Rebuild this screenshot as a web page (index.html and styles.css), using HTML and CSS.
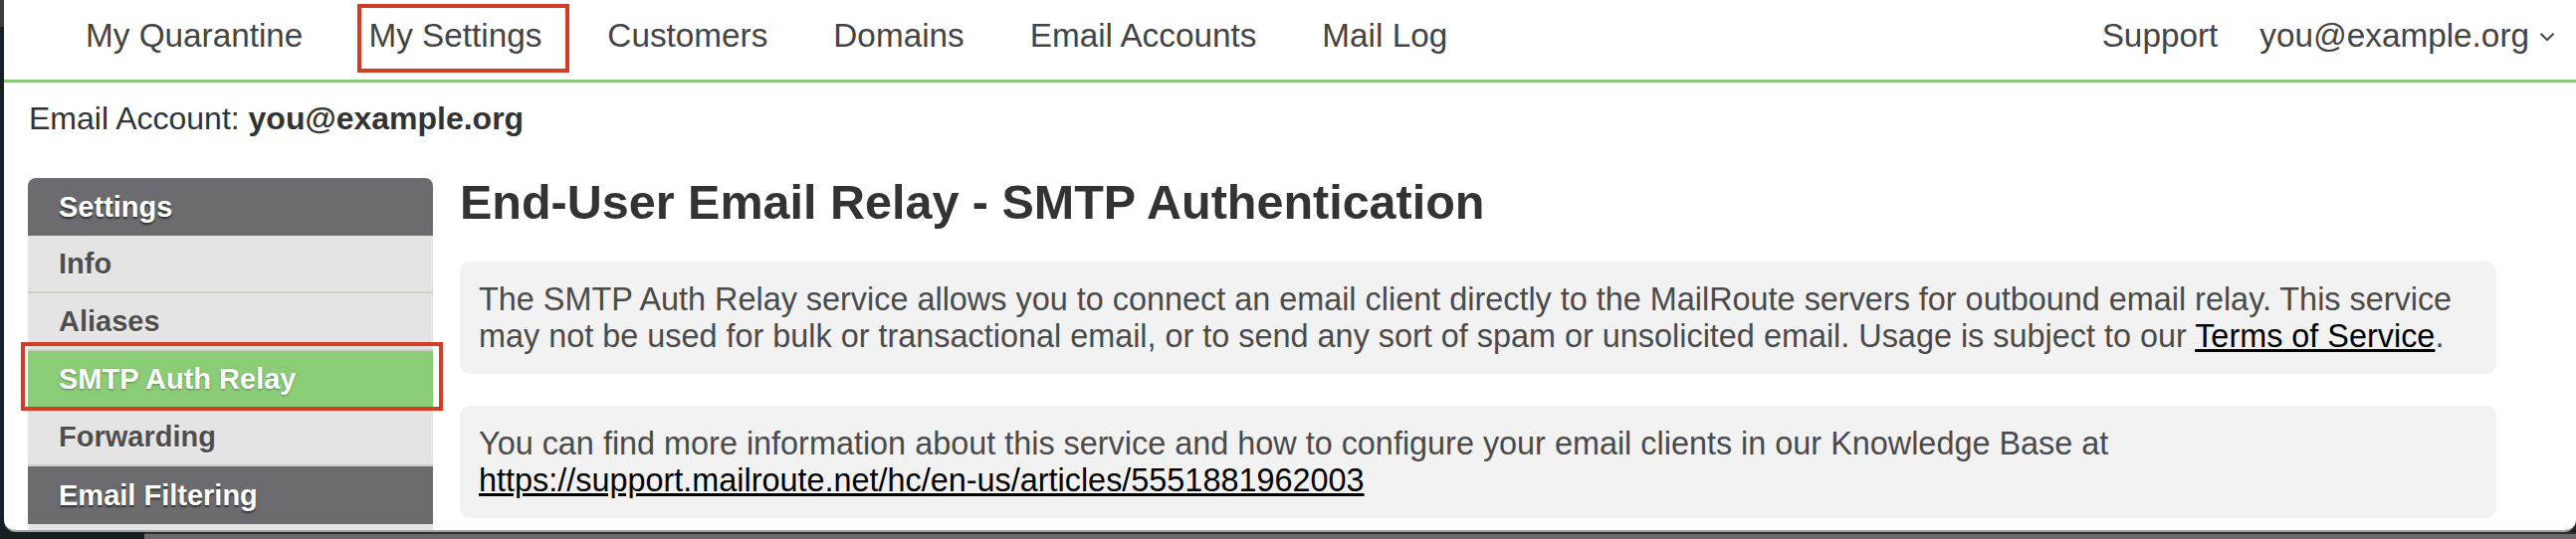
FILE: index.html
```html
<!DOCTYPE html>
<html lang="en">
<head>
<meta charset="utf-8">
<title>End-User Email Relay - SMTP Authentication</title>
<link rel="stylesheet" href="styles.css">
</head>
<body>
<div class="window">
  <header class="topnav">
    <ul class="nav-main">
      <li><a class="nav-link" href="#">My Quarantine</a></li>
      <li><a class="nav-link is-current" href="#">My Settings</a></li>
      <li><a class="nav-link" href="#">Customers</a></li>
      <li><a class="nav-link" href="#">Domains</a></li>
      <li><a class="nav-link" href="#">Email Accounts</a></li>
      <li><a class="nav-link" href="#">Mail Log</a></li>
    </ul>
    <ul class="nav-right">
      <li><a class="nav-link" href="#">Support</a></li>
      <li><a class="nav-link user-menu" href="#">you@example.org<svg class="chev" width="16" height="10" viewBox="0 0 16 10" aria-hidden="true"><path d="M1.5 1.8 L8 8.2 L14.5 1.8" fill="none" stroke="#444" stroke-width="2"/></svg></a></li>
    </ul>
  </header>

  <div class="account">Email Account: <strong>you@example.org</strong></div>

  <div class="layout">
    <aside class="sidebar">
      <div class="side-head side-head-first">Settings</div>
      <a class="side-item" href="#">Info</a>
      <a class="side-item" href="#">Aliases</a>
      <a class="side-item is-active" href="#">SMTP Auth Relay</a>
      <a class="side-item" href="#">Forwarding</a>
      <div class="side-head">Email Filtering</div>
      <a class="side-item" href="#">Spam Settings</a>
    </aside>

    <main class="main">
      <h1 class="title">End-User Email Relay - SMTP Authentication</h1>
      <div class="notice">
        <p>The SMTP Auth Relay service allows you to connect an email client directly to the MailRoute servers for outbound email relay. This service may not be used for bulk or transactional email, or to send any sort of spam or unsolicited email. Usage is subject to our <a href="#">Terms of Service</a>.</p>
      </div>
      <div class="notice">
        <p>You can find more information about this service and how to configure your email clients in our Knowledge Base at <a href="#">https://support.mailroute.net/hc/en-us/articles/5551881962003</a></p>
      </div>
    </main>
  </div>
</div>
<div class="desk">
  <div class="desk-left"></div>
  <div class="desk-bar"></div>
</div>
</body>
</html>
```
FILE: styles.css
```css
* { box-sizing: border-box; }

html, body {
  margin: 0;
  padding: 0;
}

body {
  width: 2588px;
  height: 542px;
  overflow: hidden;
  background: linear-gradient(to bottom, #3c3c3c 0, #3c3c3c 27px, #172123 27px);
  font-family: "Liberation Sans", Helvetica, Arial, sans-serif;
  color: #4a4a4a;
}

.window {
  margin-left: 4px;
  height: 535px;
  background: #fff;
  border-bottom: 2px solid #a3a3a3;
  border-radius: 0 0 12px 12px;
  overflow: hidden;
}

/* ---------- top navigation ---------- */
.topnav {
  display: flex;
  align-items: flex-start;
  height: 83px;
  padding: 16px 21px 0 82px;
  border-bottom: 3px solid #89c976;
}

.nav-main,
.nav-right {
  display: flex;
  list-style: none;
  margin: 0;
  padding: 0;
  gap: 66px;
}

.nav-right {
  margin-left: auto;
  gap: 42px;
}

.nav-link {
  display: flex;
  align-items: center;
  font-size: 33.3px;
  line-height: 39px;
  color: #444;
  text-decoration: none;
  white-space: nowrap;
}

.is-current {
  position: relative;
}

.is-current::after {
  content: "";
  position: absolute;
  left: -11px;
  right: -28px;
  top: -12px;
  bottom: -18px;
  border: 4px solid #d33c27;
}

.chev {
  margin-left: 10px;
  margin-top: 2px;
}

/* ---------- account line ---------- */
.account {
  margin-top: 18px;
  padding-left: 25px;
  font-size: 32px;
  line-height: 37px;
  color: #333;
}

.account strong {
  font-weight: 700;
}

/* ---------- layout ---------- */
.layout {
  display: grid;
  grid-template-columns: 407px 1fr;
  column-gap: 27px;
  margin-top: 41px;
  padding: 0 80px 0 24px;
}

/* ---------- sidebar ---------- */
.sidebar {
  display: flex;
  flex-direction: column;
}

.side-head {
  display: flex;
  align-items: center;
  height: 58px;
  padding-left: 31px;
  background: #6c6c70;
  color: #fff;
  font-size: 29px;
  font-weight: 700;
  text-shadow: 0 2px 2px rgba(0, 0, 0, 0.55);
}

.side-head-first {
  border-radius: 8px 8px 0 0;
}

.side-item {
  display: flex;
  align-items: center;
  height: 58px;
  padding-left: 31px;
  background: #e4e4e4;
  border-bottom: 2px solid #d0cec5;
  color: #4e4e4e;
  font-size: 29px;
  font-weight: 700;
  text-decoration: none;
  text-shadow: 0 1px 0 #fff;
}

.side-item.is-active {
  position: relative;
  background: #8bcc77;
  color: #fff;
  text-shadow: 0 1px 2px rgba(0, 0, 0, 0.35);
}

.side-item.is-active::after {
  content: "";
  position: absolute;
  left: -7px;
  right: -10px;
  top: -9px;
  bottom: -4px;
  border: 4px solid #d33c27;
}

/* ---------- main ---------- */
.main {
  min-width: 0;
}

.title {
  margin: 0 0 36px;
  font-size: 48.5px;
  line-height: 48px;
  font-weight: 700;
  color: #333;
}

.notice {
  background: #f2f2f2;
  border-radius: 10px;
  padding: 20px 20px 19px 19px;
  margin-bottom: 32px;
}

.notice p {
  margin: 0;
  font-size: 32.4px;
  line-height: 37px;
  color: #4a4a4a;
}

.notice a {
  color: #000;
  text-decoration: underline;
}

/* ---------- desktop strip below window ---------- */
.desk {
  display: flex;
  height: 7px;
}

.desk-left {
  width: 145px;
  background: #162022;
}

.desk-bar {
  flex: 1;
  background: linear-gradient(to bottom, #2e2e2e 0, #2e2e2e 2px, #6a6a6a 2px);
}
```
